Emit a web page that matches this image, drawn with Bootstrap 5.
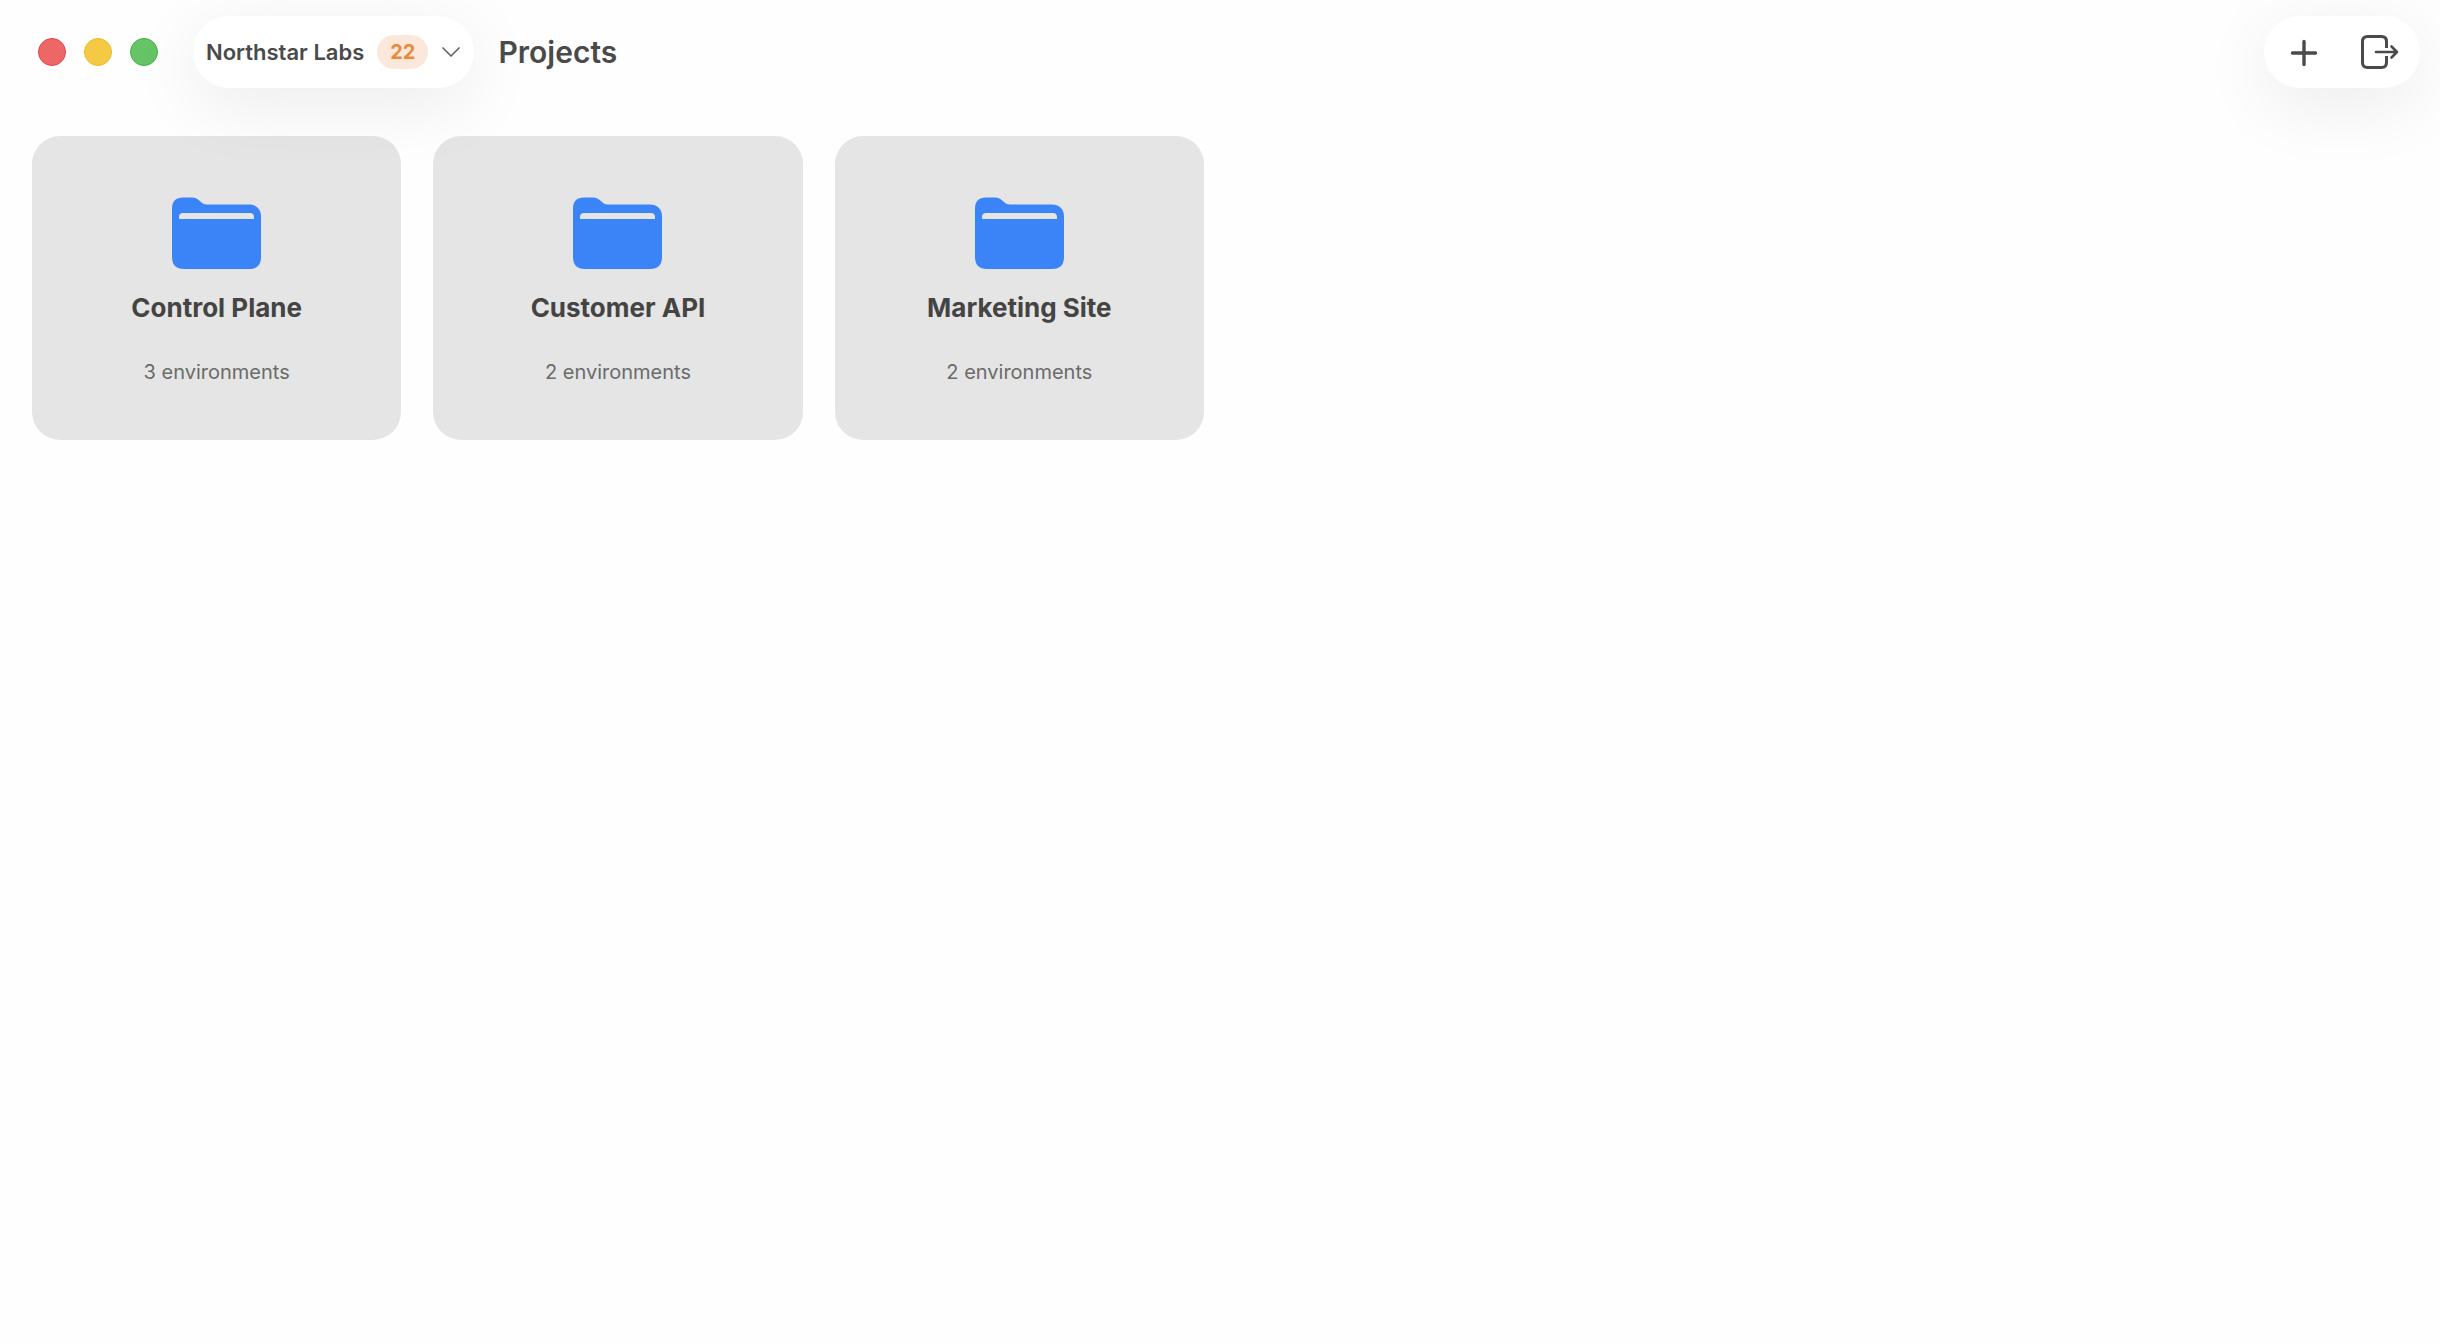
<!DOCTYPE html>
<html lang="en">
<head>
<meta charset="utf-8">
<meta name="viewport" content="width=device-width, initial-scale=1">
<title>Projects</title>
<link href="https://cdn.jsdelivr.net/npm/bootstrap@5.3.0/dist/css/bootstrap.min.css" rel="stylesheet">
<style>
  body { font-family: Inter, "Liberation Sans", sans-serif; color: #4a4a4a; background: #fefefe; }
  .titlebar { padding: 16px 20px 16px 38px; z-index: 2; }
  .lights { gap: 18px; margin-right: 35px; }
  .light { width: 28px; height: 28px; padding: 0; border-radius: 50%; border: 1px solid; }
  .light-close { background: #ed6767; border-color: #e84545; }
  .light-min { background: #f4c943; border-color: #edbb22; }
  .light-zoom { background: #66c466; border-color: #3cb43f; }
  .pill { height: 72px; border: 0; border-radius: 36px; background: #fff; box-shadow: 0 16px 72px rgba(0, 0, 0, .08); }
  .team { padding: 0 13px; gap: 13px; font-size: 22px; line-height: 28px; font-weight: 600; color: #4a4a4a; }
  .team-count { height: 34px; padding: 0 13px; border-radius: 17px; background: #fce8db; color: #e98b3f; font-size: 20px; line-height: 34px; font-weight: 700; }
  .page-title { margin: 0 0 0 24px; font-size: 30px; line-height: 36px; font-weight: 600; }
  .tool { width: 78px; height: 72px; padding: 0; border: 0; background: none; color: #4a4a4a; }
  .projects { padding: 32px; }
  .projects > .row { --bs-gutter-x: 32px; row-gap: 32px; }
  .project { height: 304px; padding-top: 60px; border-radius: 28px; background: #e5e5e5; color: #444; text-decoration: none; }
  .project-name { margin: 20px 0 0; font-size: 26px; line-height: 36px; font-weight: 700; }
  .project-envs { margin: 32px 0 0; font-size: 20px; line-height: 28px; color: #6b6b6b; }
</style>
<script defer src="https://cdn.jsdelivr.net/npm/bootstrap@5.3.0/dist/js/bootstrap.bundle.min.js"></script>
</head>
<body>
<svg class="d-none" aria-hidden="true">
  <symbol id="folder" viewBox="1 0 89 74">
    <path fill="#3b84f7" fill-rule="evenodd" d="M1 13C1 5 5 1.500 12 1.500H21C24 1.500 26 2.500 28.500 4.800C31 7 32.500 8.500 36 8.500H78C85 8.500 90 13 90 20V61C90 69 86 73 78 73H13C5 73 1 69 1 61ZM8 23H83V21C83 18.500 81.500 17 79 17H12C9.500 17 8 18.500 8 21Z"/>
  </symbol>
</svg>

<header class="titlebar d-flex align-items-center position-relative">
  <div class="lights d-flex">
    <button type="button" class="light light-close" aria-label="Close"></button>
    <button type="button" class="light light-min" aria-label="Minimize"></button>
    <button type="button" class="light light-zoom" aria-label="Zoom"></button>
  </div>
  <button type="button" class="pill team d-flex align-items-center">
    <span>Northstar Labs</span>
    <span class="team-count">22</span>
    <svg width="20" height="20" viewBox="0 0 20 20" fill="none" stroke="#666" stroke-width="1.700" stroke-linecap="round" stroke-linejoin="round" aria-hidden="true"><path d="M2 6L10 14L18 6"/></svg>
  </button>
  <h1 class="page-title">Projects</h1>
  <div class="pill d-flex ms-auto">
    <button type="button" class="tool d-flex align-items-center justify-content-center" aria-label="New project">
      <svg width="40" height="40" viewBox="0 0 40 40" fill="none" stroke="currentColor" stroke-width="3.400" stroke-linecap="round" aria-hidden="true"><path d="M21 9.500V32.500M9.500 21H32.500"/></svg>
    </button>
    <button type="button" class="tool d-flex align-items-center justify-content-center" aria-label="Sign out">
      <svg width="40" height="40" viewBox="0 0 40 40" fill="none" stroke="currentColor" aria-hidden="true">
        <path stroke-width="3" d="M25.500 16V9.500Q25.500 4.500 20.500 4.500H6.500Q1.500 4.500 1.500 9.500V30.500Q1.500 35.500 6.500 35.500H20.500Q25.500 35.500 25.500 30.500V24"/>
        <path stroke-width="2.600" stroke-linecap="round" stroke-linejoin="round" d="M15 20H36M30.500 14.500L36 20L30.500 25.500"/>
      </svg>
    </button>
  </div>
</header>

<main class="projects">
  <div class="row row-cols-1 row-cols-sm-2 row-cols-lg-4 row-cols-xl-6">
    <div class="col">
      <a href="#control-plane" class="project d-flex flex-column align-items-center">
        <svg width="89" height="74" aria-hidden="true"><use href="#folder"/></svg>
        <h2 class="project-name">Control Plane</h2>
        <p class="project-envs">3 environments</p>
      </a>
    </div>
    <div class="col">
      <a href="#customer-api" class="project d-flex flex-column align-items-center">
        <svg width="89" height="74" aria-hidden="true"><use href="#folder"/></svg>
        <h2 class="project-name">Customer API</h2>
        <p class="project-envs">2 environments</p>
      </a>
    </div>
    <div class="col">
      <a href="#marketing-site" class="project d-flex flex-column align-items-center">
        <svg width="89" height="74" aria-hidden="true"><use href="#folder"/></svg>
        <h2 class="project-name">Marketing Site</h2>
        <p class="project-envs">2 environments</p>
      </a>
    </div>
  </div>
</main>
</body>
</html>
